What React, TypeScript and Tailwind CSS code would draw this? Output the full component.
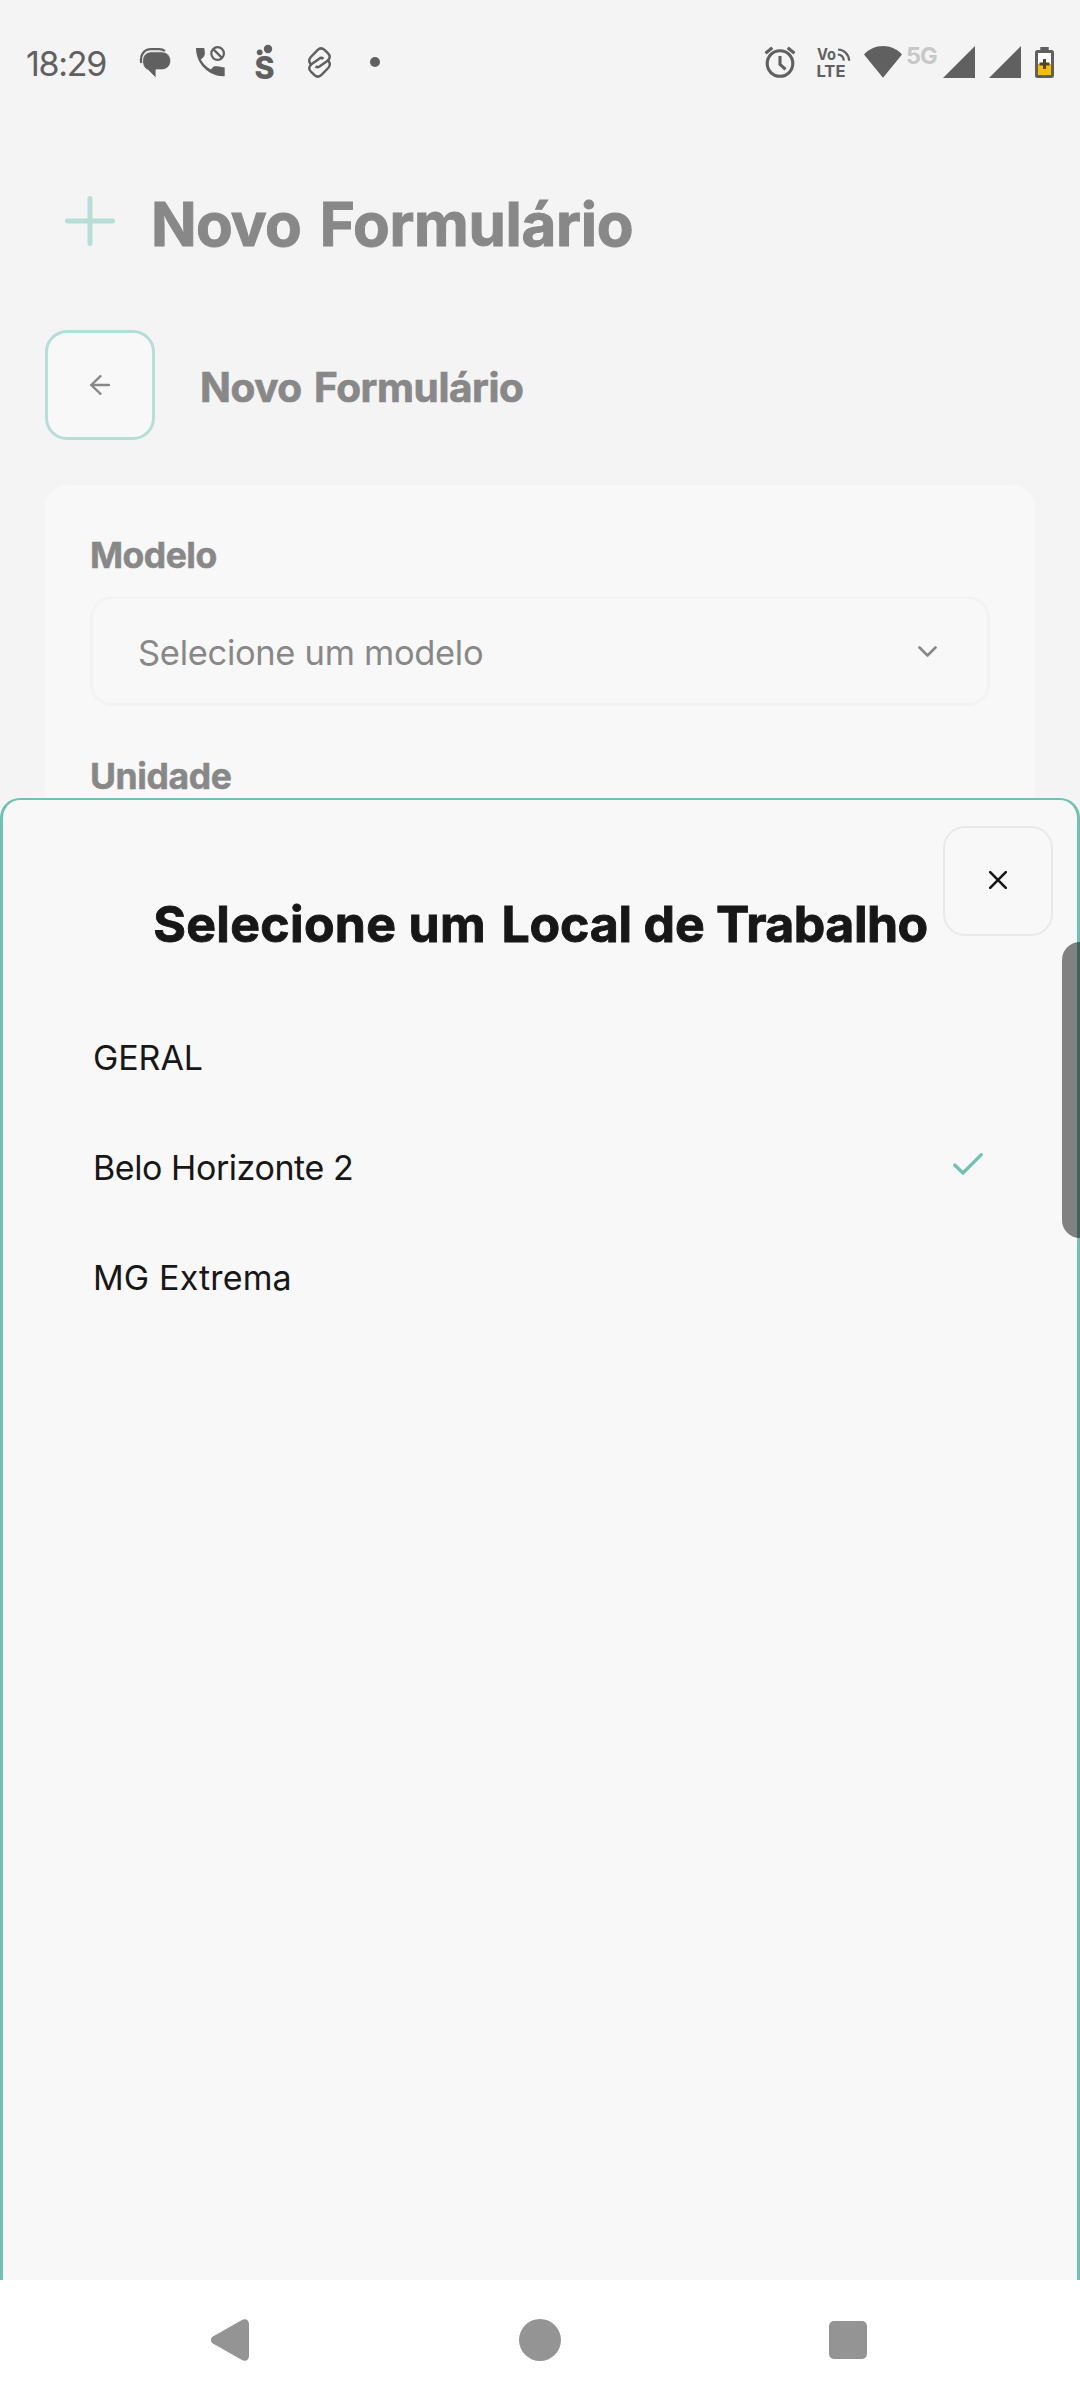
import React from 'react';

const workplaces = [
  { name: 'GERAL', tracking: 'tracking-[-0.1px]' },
  { name: 'Belo Horizonte 2', tracking: 'tracking-[-0.43px]', selected: true },
  { name: 'MG Extrema', tracking: 'tracking-[0.15px]' },
];

function StatusBar() {
  return (
    <header className="flex h-[126px] items-start pt-[44px] text-[#606060]">
      <time className="ml-[26px] w-[113px] text-[34px] leading-[40px] tracking-[-1.3px]">18:29</time>

      {/* Messages */}
      <svg className="h-9 w-9 shrink-0" viewBox="0 0 36 36" fill="currentColor">
        <path d="M2.300 19C.5 10 6 5.200 12 5.200h8c2.500 0 4.500.7 6 1.900" fill="none" stroke="currentColor" strokeWidth="2.300" />
        <path d="M12.500 7.800H22.500c5.200 0 9.200 3.900 9.200 9s-4 9-9.200 9h-5.500V34.200l-7.800-8C5.200 24.500 3.600 21 3.600 17 3.600 11.700 7.200 7.800 12.500 7.800Z" stroke="#f4f4f4" strokeWidth="0.800" />
      </svg>

      {/* Blocked call */}
      <svg className="ml-[17px] h-9 w-9 shrink-0" viewBox="0 0 36 36">
        <path d="M4 4h8.200c1 5.200 1 7-.8 9.200l-2.600 2.300c2.400 4.500 5.500 7.600 10 10l2.900-2.900c1-.6 5-.2 11 1v8.600C18 33 4 20.500 4 4Z" fill="currentColor" />
        <circle cx="25.600" cy="9.500" r="6.300" fill="none" stroke="currentColor" strokeWidth="2.200" />
        <path d="m21.200 5.100 8.800 8.800" stroke="currentColor" strokeWidth="2.200" />
      </svg>

      {/* App badge with two dots */}
      <svg className="ml-[24px] h-[46px] w-[26px] shrink-0 overflow-visible" viewBox="0 0 26 46" fill="currentColor">
        <circle cx="7.700" cy="8.300" r="2.900" />
        <circle cx="16" cy="5" r="4.200" />
        <text x="2.500" y="35" fontFamily="Inter" fontSize="31" fontWeight="800" textLength="20" lengthAdjust="spacingAndGlyphs">S</text>
      </svg>

      {/* Interlocked loops */}
      <svg className="ml-[29px] h-9 w-[26px] shrink-0" viewBox="0 0 26 36" fill="none" stroke="currentColor" strokeWidth="2.500" strokeLinejoin="round">
        <path d="M8.500 22.300c1.500 1.200 3.200 1 4.600-.2l7.200-5.200c3-2.200 3.200-5.200.8-7.600l-3.600-3.400c-2.300-2-4.900-1.900-7 .2L3.800 13c-2.600 2.900-2 6.500 1.300 8" />
        <path transform="rotate(180 12.500 18.500)" d="M8.500 22.300c1.500 1.200 3.200 1 4.600-.2l7.200-5.200c3-2.200 3.200-5.200.8-7.600l-3.600-3.400c-2.300-2-4.900-1.900-7 .2L3.800 13c-2.600 2.900-2 6.500 1.300 8" />
      </svg>

      <span className="ml-[37px] mt-[13px] h-[10px] w-[10px] rounded-full bg-[#606060]" />

      {/* Alarm */}
      <svg className="ml-auto h-9 w-9 shrink-0" viewBox="0 0 36 36" fill="none" stroke="currentColor" strokeWidth="3.100">
        <circle cx="18" cy="19.500" r="12.800" />
        <path d="M18 12v8.300l5.500 5" />
        <path d="m3.500 9.200 6.800-5.500M32.500 9.200l-6.800-5.500" />
      </svg>

      {/* VoLTE */}
      <svg className="ml-[18px] h-9 w-9 shrink-0" viewBox="0 0 36 36" fill="currentColor" fontFamily="Inter" fontWeight="700">
        <text x="1" y="16" fontSize="16" textLength="19" lengthAdjust="spacingAndGlyphs">Vo</text>
        <text x="0.500" y="33" fontSize="16.500" textLength="29" lengthAdjust="spacingAndGlyphs">LTE</text>
        <path d="M22 5.500c6 .2 10.800 4.800 11.200 11.300M21.800 10.500c3.400.2 5.700 2.500 6 6.200" fill="none" stroke="currentColor" strokeWidth="2.200" />
      </svg>

      {/* Wi-Fi */}
      <svg className="ml-[11px] h-9 w-[40px] shrink-0" viewBox="0 0 40 36" fill="currentColor">
        <path d="M1 10.500C6 5 12.500 2 20 2s14 3 19 8.500L20 33.800Z" />
      </svg>

      <span className="ml-[3px] w-[33px] text-[23.5px] font-bold leading-[24px] tracking-[-0.9px] text-[#c8c8c8]">5G</span>

      <svg className="ml-[4px] h-9 w-8 shrink-0" viewBox="0 0 32 36" fill="currentColor">
        <path d="M32 2v32H0Z" />
      </svg>
      <svg className="ml-[14px] h-9 w-8 shrink-0" viewBox="0 0 32 36" fill="currentColor">
        <path d="M32 2v32H0Z" />
      </svg>

      {/* Battery */}
      <svg className="ml-[14px] mr-[26px] h-9 w-[19px] shrink-0" viewBox="0 0 19 36">
        <rect x="5.300" y="3" width="8.400" height="5" fill="#606060" />
        <rect x="1.500" y="7.500" width="16" height="25" rx="1" fill="#fff" stroke="#606060" strokeWidth="3" />
        <rect x="3" y="20" width="13" height="11" fill="#fbbc04" />
        <path d="M9.500 15v10M4.500 20h10" stroke="#4f4520" strokeWidth="3" />
      </svg>
    </header>
  );
}

function FormPage() {
  return (
    <main>
      <div className="flex h-[196px] items-center pl-[65px]">
        <svg className="relative -top-[3px] h-[50px] w-[50px]" viewBox="0 0 50 50" stroke="#b5dfd6" strokeWidth="5" strokeLinecap="round">
          <path d="M25 2.500v45M2.500 25h45" />
        </svg>
        <h1 className="ml-[36px] text-[60px] font-bold leading-[60px] tracking-[-0.3px] [-webkit-text-stroke:1px_#888888]">
          <span className="mr-[5px] tracking-[-0.8px]">Novo</span> Formulário
        </h1>
      </div>

      <div className="mt-2 flex items-center pl-[45px]">
        <button className="flex h-[110px] w-[110px] items-center justify-center rounded-[22px] border-[3px] border-[#b5dfd6] bg-[#f8f8f8]">
          <svg className="h-5 w-5" viewBox="0 0 20 20" fill="none" stroke="#888888" strokeWidth="2.400" strokeLinecap="round" strokeLinejoin="round">
            <path d="M19 10H1.200M10.500 1.200 1.200 10l9.300 8.800" />
          </svg>
        </button>
        <h2 className="relative top-[2.500px] ml-[45px] text-[40.5px] font-bold leading-[48px] tracking-[-0.4px] [-webkit-text-stroke:0.7px_#888888]">
          <span className="mr-[3px]">Novo</span> Formulário
        </h2>
      </div>

      <section className="mx-[45px] mt-[45px] h-[900px] rounded-[22px] bg-[#f8f8f8] px-[45px] pt-[50px]">
        <p className="text-[35.5px] font-bold leading-[42px] tracking-[-0.5px] [-webkit-text-stroke:0.5px_#888888]">Modelo</p>
        <div className="mt-[19px] flex h-[110px] items-center justify-between rounded-[22px] border-[3px] border-[#f3f3f3] pl-[45px] pr-[50px]">
          <span className="relative top-[1.5px] text-[34.5px] leading-[42px] tracking-[-0.31px]">Selecione um modelo</span>
          <svg className="h-[11px] w-[19px]" viewBox="0 0 19 11" fill="none" stroke="#888888" strokeWidth="2.600" strokeLinecap="round" strokeLinejoin="round">
            <path d="m1.500 1.500 8 8 8-8" />
          </svg>
        </div>
        <p className="mt-[50px] text-[35.5px] font-bold leading-[42px] tracking-[-0.4px] [-webkit-text-stroke:0.5px_#888888]">Unidade</p>
      </section>
    </main>
  );
}

function WorkplaceSheet() {
  return (
    <div className="absolute inset-x-0 top-[798px] h-[1482px] rounded-t-[20px] border-x-[3px] border-t-2 border-[#6fc1b1] bg-[#f8f8f8] text-[#171717]">
      <button className="absolute right-[24px] top-[26px] flex h-[110px] w-[110px] items-center justify-center rounded-[22px] border-2 border-[#e9e9e9]">
        <svg className="relative -top-px h-[18px] w-[18px]" viewBox="0 0 18 18" stroke="#171717" strokeWidth="2.600" strokeLinecap="round">
          <path d="m1.200 1.200 15.600 15.600M16.800 1.200 1.200 16.800" />
        </svg>
      </button>
      <h3 className="pl-px pt-[94px] text-center text-[50px] font-bold leading-[60px] [-webkit-text-stroke:0.9px_#171717]">
        <span className="tracking-[0.3px]">Selecione um</span>
        <span className="ml-[4px] tracking-[-0.2px]"> Local de </span>
        <span className="tracking-[-0.5px]">Trabalho</span>
      </h3>
      <ul className="mt-[49px]">
        {workplaces.map((w) => (
          <li key={w.name} className="flex h-[110px] items-center justify-between pl-[90px] pr-[94px]">
            <span className={`text-[34px] leading-[40px] ${w.tracking}`}>{w.name}</span>
            {w.selected && (
              <svg className="relative -top-[4px] h-[22px] w-[30px]" viewBox="0 0 30 22" fill="none" stroke="#6fc1b1" strokeWidth="3.200" strokeLinecap="round" strokeLinejoin="round">
                <path d="m1.700 12 8.300 8L28.300 1.700" />
              </svg>
            )}
          </li>
        ))}
      </ul>
    </div>
  );
}

function NavigationBar() {
  return (
    <nav className="absolute inset-x-0 bottom-0 flex h-[120px] items-center bg-white pl-[211px] text-[#949494]">
      <svg className="h-[42px] w-[38px]" viewBox="0 0 38 42" fill="currentColor">
        <path d="M1.800 17.500 31 1c3.500-2 7 0 7 4v32c0 4-3.500 6-7 4L1.800 24.500c-2.400-1.600-2.400-5.400 0-7Z" />
      </svg>
      <span className="ml-[270px] h-[42px] w-[42px] rounded-full bg-[#949494]" />
      <span className="ml-[268px] h-[38px] w-[38px] rounded-[5px] bg-[#949494]" />
    </nav>
  );
}

export default function App() {
  return (
    <div className="relative h-[2400px] w-[1080px] overflow-hidden bg-[#f4f4f4] font-['Inter',sans-serif] text-[#888888]">
      <StatusBar />
      <FormPage />
      <WorkplaceSheet />
      <div className="absolute right-0 top-[942px] h-[296px] w-[18px] rounded-l-[18px] bg-black/48" />
      <NavigationBar />
    </div>
  );
}
